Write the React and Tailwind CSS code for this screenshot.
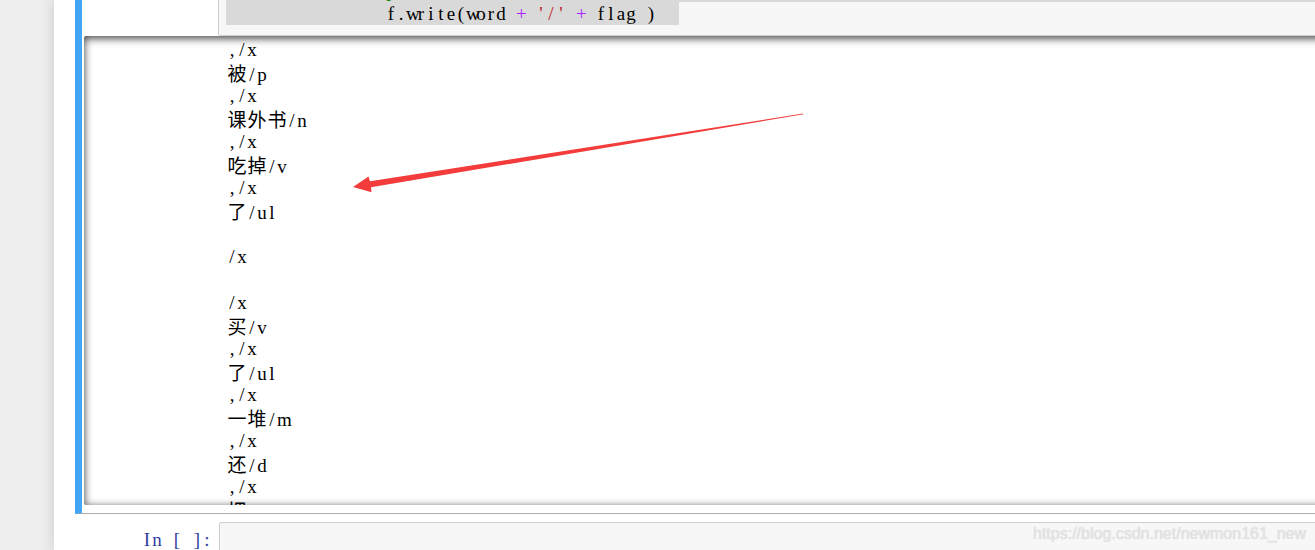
import React from 'react';

const outputLines = [
  ',/x', '被/p', ',/x', '课外书/n', ',/x', '吃掉/v', ',/x', '了/ul', '', '/x', '', '/x',
  '买/v', ',/x', '了/ul', ',/x', '一堆/m', ',/x', '还/d', ',/x', '把/p',
];

// SimSun-like grid: latin glyphs sit in 10px cells, CJK glyphs in 20px cells
const Glyphs = ({ text }) =>
  Array.from(text).map((ch, i) =>
    /[\u4e00-\u9fff]/.test(ch) ? (
      <span key={i} className="inline-block w-[20px] text-center font-['Noto_Sans_CJK_SC',sans-serif] text-[19px]">{ch}</span>
    ) : (
      <span key={i} className="inline-block w-[10px] whitespace-pre text-center">{ch}</span>
    )
  );

const App = () => {
  return (
    <div className="relative flex h-[550px] w-[1315px] overflow-hidden bg-[#eeeeee] font-['Liberation_Serif','Noto_Sans_CJK_SC',serif] text-[19px] text-black">
      <div className="w-[54px] shrink-0" />

      {/* Notebook container */}
      <div className="w-[1300px] shrink-0 bg-white pl-[21px] shadow-[0_0_12px_1px_rgba(87,87,87,0.2)]">
        {/* Selected cell */}
        <div className="-mt-[30px] border border-l-[7px] border-[#ababab] border-l-[#42a5f5] pt-[5px] pb-[8px]">
          <div className="flex">
            <div className="w-[136px] shrink-0" />
            <div className="flex-1 rounded-[2px] border border-[#cfcfcf] bg-[#f7f7f7] pt-[2px] pb-[10px] pl-[7px]">
              <div className="h-[23px] overflow-hidden whitespace-pre bg-[#d9d9d9] leading-[23px]">
                <Glyphs text="                " />
                <span className="text-[#008000]"><Glyphs text="print" /></span>
              </div>
              <div className="h-[23px] leading-[23px]">
                <span className="inline-block w-[453px] whitespace-pre bg-[#d9d9d9]">
                  <Glyphs text="                f.write(word " />
                  <span className="text-[#aa22ff]"><Glyphs text="+" /></span>
                  <Glyphs text=" " />
                  <span className="text-[#ba2121]"><Glyphs text="'/'" /></span>
                  <Glyphs text=" " />
                  <span className="text-[#aa22ff]"><Glyphs text="+" /></span>
                  <Glyphs text=" flag )" />
                </span>
              </div>
            </div>
          </div>

          {/* Scrolled output */}
          <div className="ml-[2px] h-[469px] overflow-hidden rounded-[2px] pt-[2px] pl-[143px] shadow-[inset_0_2px_8px_rgba(0,0,0,0.8)]">
            {outputLines.map((line, i) => (
              <div key={i} className="h-[23px] whitespace-pre leading-[23px]">
                <Glyphs text={line} />
              </div>
            ))}
          </div>
        </div>

        {/* Next empty cell */}
        <div className="flex border border-transparent pt-[7px]">
          <div className="w-[143px] shrink-0 pt-[6px] pr-[7px] text-right leading-[23px] text-[#303f9f]">
            <Glyphs text="In [ ]:" />
          </div>
          <div className="h-[60px] flex-1 rounded-[2px] border border-[#cfcfcf] bg-[#f7f7f7]" />
        </div>
      </div>

      {/* Annotation arrow */}
      <svg className="pointer-events-none absolute left-0 top-0" width="1315" height="550">
        <polygon
          points="353,187 368.5,176.5 370,181.3 803,113.6 803.5,114.3 371,187.3 371.5,192.3"
          fill="#f43c3c"
        />
      </svg>

      {/* Watermark */}
      <div className="absolute left-[1033px] top-[522px] font-['Liberation_Sans',sans-serif] text-[16px] text-[#e4e4e4] [text-shadow:0_0_1px_#cfcfcf]">
        https://blog.csdn.net/newmon161_new
      </div>
    </div>
  );
};

export default App;
